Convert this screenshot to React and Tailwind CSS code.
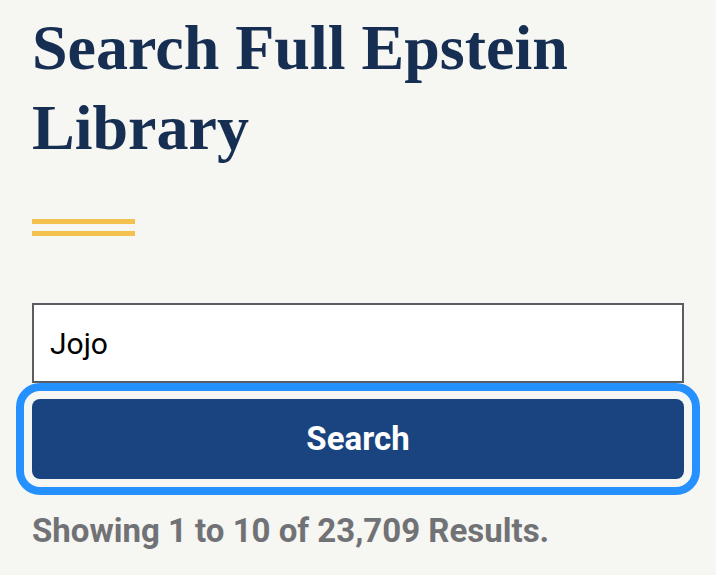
import React, { useState } from "react";

const App = () => {
  const [query, setQuery] = useState("Jojo");

  return (
    <div className="min-h-[575px] bg-[#f6f6f2] px-8 pt-[8px]">
      {/* Title */}
      <h1 className="font-['Liberation_Serif',serif] text-[64px] leading-[80px] font-bold text-[#162e51]">
        Search Full Epstein Library
      </h1>

      {/* Accent double line */}
      <div className="mt-[51px] flex w-[103px] flex-col gap-[7px]">
        <div className="h-[5px] bg-[#f2c14e]" />
        <div className="h-[5px] bg-[#f2c14e]" />
      </div>

      {/* Search form */}
      <form className="mt-[67px]" onSubmit={(e) => e.preventDefault()}>
        <input
          type="text"
          value={query}
          onChange={(e) => setQuery(e.target.value)}
          className="block h-[80px] w-full border-2 border-[#5a5d62] bg-white px-4 font-['Roboto',sans-serif] text-[30px] text-black outline-none"
        />
        <button
          type="submit"
          className="mt-[16px] block h-[80px] w-full rounded-[8px] bg-[#1a4480] font-['Roboto',sans-serif] text-[33px] font-bold text-white outline-[8px] outline-offset-[8px] outline-[#2491ff] outline-solid"
        >
          Search
        </button>
      </form>

      {/* Result count */}
      <p className="mt-[32px] font-['Roboto',sans-serif] text-[33px] leading-[40px] font-bold text-[#707275]">
        Showing 1 to 10 of 23,709 Results.
      </p>
    </div>
  );
};

export default App;
